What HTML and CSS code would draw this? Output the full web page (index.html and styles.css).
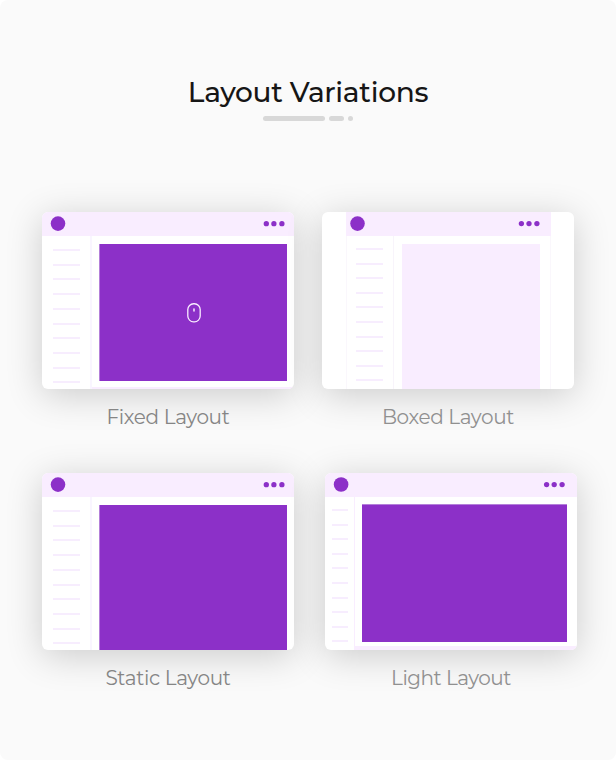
FILE: index.html
```html
<!DOCTYPE html>
<html lang="en">
<head>
<meta charset="utf-8">
<title>Layout Variations</title>
<link rel="stylesheet" href="styles.css">
</head>
<body>
<main class="page">
  <header class="heading">
    <h1>Layout Variations</h1>
    <div class="rule"><i></i><i></i><i></i></div>
  </header>
  <section class="grid">
    <figure class="item">
      <div class="card fixed">
        <div class="frame">
          <div class="bar"><svg class="logo" width="16" height="16" viewBox="0 0 16 16"><circle cx="8" cy="7.6" r="7.3"/></svg><svg class="dots" width="21" height="6" viewBox="0 0 21 6"><circle cx="2.3" cy="2.7" r="2.65"/><circle cx="9.9" cy="2.7" r="2.65"/><circle cx="17.9" cy="2.7" r="2.65"/></svg></div>
          <div class="body">
            <div class="side"><i></i><i></i><i></i><i></i><i></i><i></i><i></i><i></i><i></i><i></i></div>
            <div class="content"><div class="panel">
              <svg class="mouse" width="14" height="20" viewBox="0 0 14 20" fill="none" stroke="#f9edff"><rect x=".8" y=".75" width="12.4" height="18.1" rx="5.8" stroke-width="1.3"/><path d="M7 6v2" stroke-width="1.5" stroke-linecap="round"/></svg>
            </div><div class="foot"></div></div>
          </div>
        </div>
      </div>
      <figcaption class="cap-fixed">Fixed Layout</figcaption>
    </figure>
    <figure class="item">
      <div class="card boxed">
        <div class="frame">
          <div class="bar"><svg class="logo" width="16" height="16" viewBox="0 0 16 16"><circle cx="7.5" cy="7.6" r="7.3"/></svg><svg class="dots" width="21" height="6" viewBox="0 0 21 6"><circle cx="2.4" cy="2.6" r="2.65"/><circle cx="10" cy="2.6" r="2.65"/><circle cx="17.9" cy="2.6" r="2.65"/></svg></div>
          <div class="body">
            <div class="side"><i></i><i></i><i></i><i></i><i></i><i></i><i></i><i></i><i></i><i></i></div>
            <div class="content"><div class="panel"></div></div>
          </div>
        </div>
      </div>
      <figcaption class="cap-boxed">Boxed Layout</figcaption>
    </figure>
    <figure class="item">
      <div class="card static">
        <div class="frame">
          <div class="bar"><svg class="logo" width="16" height="16" viewBox="0 0 16 16"><circle cx="8" cy="7.6" r="7.3"/></svg><svg class="dots" width="21" height="6" viewBox="0 0 21 6"><circle cx="2.3" cy="2.7" r="2.65"/><circle cx="9.9" cy="2.7" r="2.65"/><circle cx="17.9" cy="2.7" r="2.65"/></svg></div>
          <div class="body">
            <div class="side"><i></i><i></i><i></i><i></i><i></i><i></i><i></i><i></i><i></i><i></i></div>
            <div class="content"><div class="panel"></div></div>
          </div>
        </div>
      </div>
      <figcaption class="cap-static">Static Layout</figcaption>
    </figure>
    <figure class="item shifted">
      <div class="card light">
        <div class="frame">
          <div class="bar"><svg class="logo" width="16" height="16" viewBox="0 0 16 16"><circle cx="8.1" cy="7.5" r="7.3"/></svg><svg class="dots" width="21" height="6" viewBox="0 0 21 6"><circle cx="2.6" cy="2.6" r="2.65"/><circle cx="10.2" cy="2.6" r="2.65"/><circle cx="18.1" cy="2.6" r="2.65"/></svg></div>
          <div class="body">
            <div class="side"><i></i><i></i><i></i><i></i><i></i><i></i><i></i><i></i><i></i><i></i></div>
            <div class="content"><div class="panel"></div><div class="foot"></div></div>
          </div>
        </div>
      </div>
      <figcaption class="cap-light">Light Layout</figcaption>
    </figure>
  </section>
</main>
</body>
</html>
```
FILE: styles.css
```css
* { box-sizing: border-box; }
body { margin: 0; background: #fff; font-family: Montserrat, Inter, "Open Sans", sans-serif; }
.page { height: 760px; background: #fafafa; border-radius: 8px; padding-top: 72px; overflow: hidden; }
.heading { height: 140px; display: flex; flex-direction: column; align-items: center; }
h1 { margin: 0; font-size: 28px; line-height: 40px; font-weight: 500; color: #161616; white-space: nowrap; letter-spacing: -.29px; }
.rule { display: flex; gap: 4px; margin-top: 4px; }
.rule i { height: 5px; border-radius: 3px; background: #d8d8d8; }
.rule i:nth-child(1) { width: 62px; }
.rule i:nth-child(2) { width: 15px; }
.rule i:nth-child(3) { width: 5px; }

.grid { display: grid; grid-template-columns: 252px 252px; grid-template-rows: 261px 261px; column-gap: 28px; padding-left: 42px; }
.item { margin: 0; width: 252px; }
.shifted { margin-left: 3px; }
.card { width: 252px; height: 177px; background: #fff; border-radius: 6px; box-shadow: 0 6px 36px rgba(0, 0, 0, .19); }
.frame { height: 177px; border-radius: 6px; overflow: hidden; display: flex; flex-direction: column; }
.bar { height: 24px; flex: none; background: #f9edff; display: flex; justify-content: space-between; align-items: center; padding: 0 9px 0 8px; }
.logo, .dots { display: block; fill: #8c30c8; }
.dots { overflow: visible; }
.body { flex: 1; display: flex; min-height: 0; }
.side { width: 50px; flex: none; border-right: 2px solid #f9f5ff; padding: 13px 0 0 11px; display: flex; flex-direction: column; gap: 12.72px; }
.side i { flex: none; width: 27.4px; height: 2px; background: #f7edfe; }
.content { flex: 1; display: flex; flex-direction: column; }
.panel { flex: none; margin: 8px 7px 0 8px; height: 137.4px; background: #8c30c8; display: flex; align-items: center; justify-content: center; }
.fixed .panel, .static .panel { border-left: 1px solid #b47fda; margin-left: 7px; }
.mouse { margin-right: -1px; }
.foot { margin-top: auto; background: #f9edff; height: 2px; }

.static .panel { height: 145px; }

.boxed .frame { width: 205px; margin-left: 24px; border-radius: 0; }
.boxed .bar { padding: 0 11px 0 4px; }
.boxed .body { border: solid #faf7fc; border-width: 0 1px; }
.boxed .side { width: 47px; border-right: 1px solid #f8f4fb; padding: 12px 0 0 9px; gap: 12.6px; }
.boxed .side i { width: 27px; }
.boxed .panel { margin: 8px 10px 0 8px; height: 145px; background: #f9edff; }

.light .bar { padding: 0 12px 0 8px; }
.light .side { width: 30px; border-right: 1px solid #f9edff; padding: 12.1px 0 0 7px; gap: 12.6px; }
.light .side i { width: 15.8px; }
.light .panel { margin: 7px 10px 0 7px; height: 138px; border-top: 1px solid #b47fda; }
.light .foot { height: 4px; }

figcaption { text-align: center; margin-top: 14px; font-size: 20px; line-height: 28px; font-weight: 400; color: #858585; white-space: nowrap; letter-spacing: -.34px; }
.cap-boxed, .cap-light { color: #909090; }
.cap-light { letter-spacing: -.48px; }
```
